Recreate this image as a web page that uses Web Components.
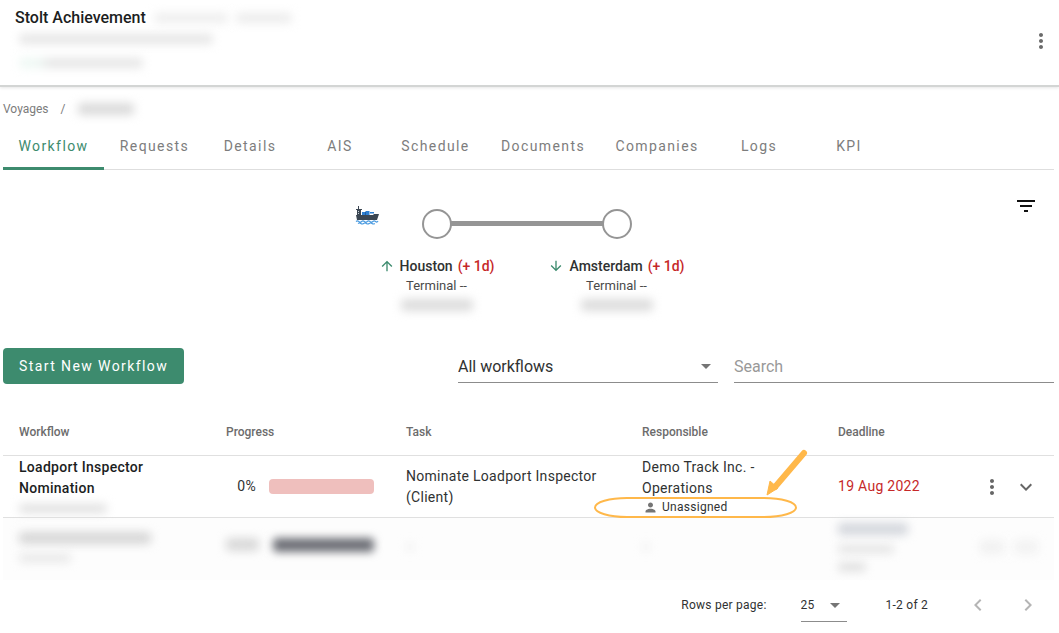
<!DOCTYPE html>
<html lang="en">
<head>
<meta charset="utf-8">
<meta name="viewport" content="width=device-width, initial-scale=1">
<title>Stolt Achievement – Workflow</title>
<style>
  body { margin: 0; background: #fff; color: #303232; font: 14px/21px Roboto, "Liberation Sans", sans-serif; --green: #3d8b6e; --red: #c62828; --line: #e0e0e0; }
</style>
</head>
<body>
<voyage-page></voyage-page>
<script>
const define = (name, html, setup) => customElements.define(name, class extends HTMLElement {
  constructor() {
    super();
    const t = document.createElement('template');
    t.innerHTML = html;
    this.attachShadow({ mode: 'open' }).appendChild(t.content.cloneNode(true));
  }
  connectedCallback() { if (setup) setup(this, this.shadowRoot); }
});

const ICONS = {
  dots: '<path d="M12 8c1.100 0 2-.9 2-2s-.9-2-2-2-2 .9-2 2 .9 2 2 2zm0 2c-1.100 0-2 .9-2 2s.9 2 2 2 2-.9 2-2-.9-2-2-2zm0 6c-1.100 0-2 .9-2 2s.9 2 2 2 2-.9 2-2-.9-2-2-2z"/>',
  filter: '<path d="M10 18h4v-2h-4v2zM3 6v2h18V6H3zm3 7h12v-2H6v2z"/>',
  up: '<path d="M4 12l1.410 1.410L11 7.830V20h2V7.830l5.580 5.590L20 12l-8-8-8 8z"/>',
  down: '<path d="M20 12l-1.410-1.410L13 16.170V4h-2v12.170l-5.580-5.590L4 12l8 8 8-8z"/>',
  expand: '<path d="M16.590 8.590L12 13.170 7.410 8.590 6 10l6 6 6-6z"/>',
  left: '<path d="M15.410 7.410L14 6l-6 6 6 6 1.410-1.410L10.830 12z"/>',
  right: '<path d="M10 6L8.590 7.410 13.170 12l-4.580 4.590L10 18l6-6z"/>',
  caret: '<path d="M7 10l5 5 5-5z"/>',
  person: '<path d="M12 12c2.210 0 4-1.790 4-4s-1.790-4-4-4-4 1.790-4 4 1.790 4 4 4zm0 2c-2.670 0-8 1.340-8 4v2h16v-2c0-2.660-5.330-4-8-4z"/>',
  ship: '<path fill="#3b4652" d="M1 12h17l1-1h5l-2 6H2zM2 7h4v5H2zM3 3h1v4H3zM1 6h6v1H1z"/><path fill="#c9d2da" d="M3 8h1v1H3zM3 10h1v1H3z"/><path fill="#2f7fd0" d="M7 9h3v3H7zM10.500 8h4v4h-4zM15 9h4v1.500h-4z"/><path fill="#1d5fa8" d="M10 9h1v3h-1z"/><path fill="none" stroke="#4b9be0" stroke-width="1.100" d="M1 18.500q1.400-1.400 2.800 0t2.800 0 2.800 0 2.800 0 2.800 0 2.800 0 2.800 0 2.400-.5M3 20.500q1.400-1 2.800 0t2.800 0 2.800 0 2.800 0 2.800 0 2.800 0"/>'
};
define('mat-icon', `<style>
  :host { display: inline-flex; flex: none; width: var(--size, 24px); height: var(--size, 24px); }
  svg { width: 100%; height: 100%; fill: currentColor; }
</style><svg viewBox="0 0 24 24" aria-hidden="true"></svg>`,
  (el, root) => { root.querySelector('svg').innerHTML = ICONS[el.getAttribute('name')] || ''; });

/* A blurred-out value. */
define('hidden-value', `<style>
  :host { display: block; width: var(--w, 80px); height: var(--h, 8px); background: var(--c, #e6e6e6); border-radius: 4px; filter: blur(var(--b, 5px)); }
</style>`);

define('icon-button', `<style>
  :host { display: inline-flex; flex: none; }
  button { display: flex; padding: 0; border: 0; background: none; color: inherit; cursor: pointer; }
</style><button type="button"><slot></slot></button>`,
  (el, root) => root.querySelector('button').setAttribute('aria-label', el.getAttribute('label')));

define('page-header', `<style>
  :host { display: flex; align-items: center; justify-content: space-between; padding: 0 6px 3px 15px; border-bottom: 2px solid #d3d5d4; box-shadow: 0 1px 3px #0000001a; }
  .title { display: flex; align-items: center; gap: 8px; padding-top: 8px; }
  h1 { margin: 0; font-size: 16px; line-height: 20px; font-weight: 500; color: #1c1e1e; }
  .lines { display: grid; gap: 14px; padding: 6px 0 14px 4px; }
  icon-button { color: #6b6b6b; }
</style>
<div>
  <div class="title"><h1>Stolt Achievement</h1><hidden-value style="--w:74px;--h:10px;--c:#eeeeee"></hidden-value><hidden-value style="--w:56px;--h:10px;--c:#ececec"></hidden-value></div>
  <div class="lines"><hidden-value style="--w:194px;--h:10px;--c:#e6e6e6"></hidden-value><hidden-value style="--w:124px;--h:10px;--c:linear-gradient(90deg,#eef8f4 16%,#e6e6e6 24%)"></hidden-value></div>
</div>
<icon-button label="More actions"><mat-icon name="dots"></mat-icon></icon-button>`);

define('bread-crumbs', `<style>
  nav { display: flex; align-items: center; gap: 12px; padding: 12px 0 3px; font-size: 12px; line-height: 20px; color: #7c7c7c; }
  a { color: inherit; text-decoration: none; }
</style><nav aria-label="Breadcrumb"><a href="#voyages">Voyages</a><span>/</span><hidden-value style="--w:56px;--h:12px;--c:#dadada"></hidden-value></nav>`);

define('tab-item', `<style>
  :host { display: block; flex: none; width: 90px; }
  :host([size="medium"]) { width: 101px; }
  :host([size="large"]) { width: 114px; }
  button { box-sizing: border-box; width: 100%; height: 48px; padding: 3px 0 0; border: 0; border-bottom: 3px solid transparent; background: none; font: inherit; letter-spacing: 0.1em; color: #7d7d7d; cursor: pointer; }
  :host([active]) button { color: var(--green); border-color: var(--green); }
</style><button type="button" role="tab"><slot></slot></button>`,
  (el, root) => root.querySelector('button').setAttribute('aria-selected', el.hasAttribute('active')));

define('tab-bar', `<style>
  :host { display: block; }
  div { display: flex; box-shadow: inset 0 -1px #dedede; }
</style><div role="tablist"><slot></slot></div>`);

define('port-stop', `<style>
  :host { display: grid; justify-items: center; width: 180px; }
  .mark { position: relative; display: flex; justify-content: center; width: 100%; margin-bottom: 17px; }
  .dot { box-sizing: border-box; width: 30px; height: 30px; border: 2px solid #959595; border-radius: 50%; background: #fff; }
  :host([linked]) .mark::after { content: ""; position: absolute; top: 12px; left: calc(50% + 14px); width: calc(100% - 28px); height: 5px; background: #959595; }
  .name { display: flex; align-items: center; gap: 5px; line-height: 20px; font-weight: 500; --size: 16px; }
  mat-icon { color: var(--green); }
  .delay { color: var(--red); }
  .terminal { font-size: 13px; line-height: 20px; color: #4a4a4a; }
  hidden-value { margin-top: 3px; }
</style>
<div class="mark"><span class="dot"></span></div>
<div class="name"><mat-icon></mat-icon><slot></slot><span class="delay">(+ 1d)</span></div>
<div class="terminal">Terminal --</div>
<hidden-value style="--w:72px;--h:12px;--c:#dcdcdc"></hidden-value>`,
  (el, root) => {
    const i = root.querySelector('mat-icon');
    i.setAttribute('name', el.getAttribute('way'));
    i.replaceWith(i.cloneNode(true));
  });

define('voyage-track', `<style>
  :host { display: grid; grid-template-columns: 1fr auto 1fr; align-items: start; padding: 39px 16px 37px 12px; }
  .stops { position: relative; display: flex; }
  .ship { position: absolute; left: 8px; top: -6px; }
  .filter { justify-self: end; margin-top: -15px; color: #111; }
</style>
<span></span>
<div class="stops"><mat-icon class="ship" name="ship"></mat-icon><slot></slot></div>
<icon-button class="filter" label="Filter"><mat-icon name="filter"></mat-icon></icon-button>`);

define('workflow-tools', `<style>
  :host { display: flex; align-items: center; justify-content: space-between; gap: 16px; }
  .start { height: 36px; padding: 0 16px; border: 0; border-radius: 4px; background: var(--green); color: #fff; font: inherit; letter-spacing: 0.1em; cursor: pointer; }
  .fields { display: flex; gap: 16px; flex: 0 1 596px; }
  .pick { position: relative; flex: 260 1 0; }
  .pick mat-icon { position: absolute; right: 0; top: 5px; color: #757575; pointer-events: none; }
  select, input { display: block; box-sizing: border-box; width: 100%; height: 34px; padding: 2px 0 0; border: 0; border-bottom: 1px solid #8c8c8c; border-radius: 0; outline: 0; background: none; appearance: none; font: inherit; font-size: 16px; color: #303232; }
  .search { flex: 320 1 0; }
  input::placeholder { color: #999; opacity: 1; }
</style>
<button class="start" type="button">Start New Workflow</button>
<div class="fields">
  <div class="pick"><select aria-label="Workflow filter"><option>All workflows</option></select><mat-icon name="caret"></mat-icon></div>
  <div class="search"><input type="search" placeholder="Search" aria-label="Search"></div>
</div>`);

define('progress-meter', `<style>
  :host { display: flex; align-items: center; justify-content: flex-end; gap: 13px; }
  i { width: 105px; height: 15px; border-radius: 4px; background: #efbfbd; }
</style><slot></slot><i></i>`);

define('callout-mark', `<style>
  :host { position: absolute; left: -33px; top: -7px; pointer-events: none; }
  svg { display: block; width: 216px; height: 72px; }
</style><svg viewBox="0 0 216 72" aria-hidden="true">
  <rect x="2" y="49" width="201" height="19" rx="32" ry="9.500" fill="none" stroke="#ffb84a" stroke-width="2"/>
  <path d="M211 4L182 38" stroke="#ffb84a" stroke-width="6" stroke-linecap="round"/>
  <path d="M174 46l3-14 8 7z" fill="#ffb84a" stroke="#ffb84a" stroke-width="1"/>
</svg>`);

define('workflow-table', `<style>
  :host { display: block; margin-top: 25px; }
  table { width: 100%; table-layout: fixed; border-collapse: separate; border-spacing: 0; }
  th, td { padding: 0 16px; text-align: left; vertical-align: middle; border-bottom: 1px solid var(--line); }
  th { height: 46px; font-size: 12px; line-height: 20px; font-weight: 500; color: #6c6c6c; }
  td { height: 61px; letter-spacing: 0.02em; }
  .name { color: #1c1e1e; font-weight: 500; }
  .name hidden-value { margin: 5px 0 4px; }
  .late { color: var(--red); }
  .who { position: relative; padding-right: 48px; }
  .person { display: flex; align-items: center; gap: 4px; height: 18px; padding-left: 1px; font-size: 12px; --size: 15px; }
  .person mat-icon { color: #757575; }
  td.actions { padding: 0; }
  .actions div { display: flex; gap: 10px; color: #666; }
  .masked td { height: 58px; padding-bottom: 4px; border: 0; background: #fdfdfd; }
  .stack { display: grid; gap: 10px; }
  .row { display: flex; justify-content: flex-end; gap: 14px; margin-bottom: 4px; }
</style>
<table>
  <colgroup><col style="width:207px"><col style="width:180px"><col style="width:236px"><col style="width:196px"><col style="width:158px"><col style="width:74px"></colgroup>
  <thead><tr><th scope="col">Workflow</th><th scope="col">Progress</th><th scope="col">Task</th><th scope="col">Responsible</th><th scope="col">Deadline</th><th></th></tr></thead>
  <tbody>
    <tr>
      <td class="name">Loadport Inspector Nomination<hidden-value style="--w:88px;--h:9px;--c:#e0e0e0"></hidden-value></td>
      <td><progress-meter>0%</progress-meter></td>
      <td>Nominate Loadport Inspector (Client)</td>
      <td class="who">Demo Track Inc. - Operations<div class="person"><mat-icon name="person"></mat-icon>Unassigned</div><callout-mark></callout-mark></td>
      <td class="late">19 Aug 2022</td>
      <td class="actions"><div><icon-button label="Row actions"><mat-icon name="dots"></mat-icon></icon-button><icon-button label="Expand row"><mat-icon name="expand"></mat-icon></icon-button></div></td>
    </tr>
    <tr class="masked">
      <td><div class="stack"><hidden-value style="--w:132px;--h:12px;--c:#d6d6d6"></hidden-value><hidden-value style="--w:52px;--c:#e6e6e6"></hidden-value></div></td>
      <td><div class="row"><hidden-value style="--w:34px;--h:13px;--c:#d8d8d8"></hidden-value><hidden-value style="--w:103px;--h:14px;--c:#6d6f76;--b:4px"></hidden-value></div></td>
      <td><hidden-value style="--w:8px;--c:#f0f0f0"></hidden-value></td>
      <td><hidden-value style="--w:8px;--c:#f0f0f0"></hidden-value></td>
      <td><div class="stack"><hidden-value style="--w:70px;--h:12px;--c:#d3d6dc"></hidden-value><hidden-value style="--w:56px;--c:#e2e2e2"></hidden-value><hidden-value style="--w:28px;--c:#dcdcdc"></hidden-value></div></td>
      <td class="actions"><div><hidden-value style="--w:24px;--h:14px;--c:#f1f1f1"></hidden-value><hidden-value style="--w:24px;--h:14px;--c:#f2f2f2"></hidden-value></div></td>
    </tr>
  </tbody>
</table>`);

define('table-pager', `<style>
  :host { display: flex; align-items: center; justify-content: flex-end; padding: 8px 14px 0 0; font-size: 12px; line-height: 20px; letter-spacing: 0.02em; }
  .size { position: relative; width: 46px; margin: 0 39px 0 34px; }
  select { display: block; box-sizing: border-box; width: 100%; height: 34px; padding: 0; border: 0; border-bottom: 1px solid #8c8c8c; border-radius: 0; background: none; appearance: none; font: inherit; letter-spacing: inherit; color: inherit; }
  .size mat-icon { position: absolute; right: 0; top: 5px; color: #757575; pointer-events: none; }
  .steps { display: flex; gap: 26px; margin-left: 38px; color: #b5b5b5; }
</style>
<label for="rows">Rows per page:</label>
<div class="size"><select id="rows"><option>25</option></select><mat-icon name="caret"></mat-icon></div>
<span>1-2 of 2</span>
<div class="steps"><icon-button label="Previous page"><mat-icon name="left"></mat-icon></icon-button><icon-button label="Next page"><mat-icon name="right"></mat-icon></icon-button></div>`);

define('voyage-page', `<style>
  :host { display: block; }
  main { padding: 0 5px 0 3px; }
</style>
<page-header></page-header>
<main>
  <bread-crumbs></bread-crumbs>
  <tab-bar>
    <tab-item size="medium" active>Workflow</tab-item><tab-item size="medium">Requests</tab-item><tab-item>Details</tab-item><tab-item>AIS</tab-item><tab-item size="medium">Schedule</tab-item><tab-item size="large">Documents</tab-item><tab-item size="large">Companies</tab-item><tab-item>Logs</tab-item><tab-item>KPI</tab-item>
  </tab-bar>
  <voyage-track><port-stop way="up" linked>Houston</port-stop><port-stop way="down">Amsterdam</port-stop></voyage-track>
  <workflow-tools></workflow-tools>
  <workflow-table></workflow-table>
  <table-pager></table-pager>
</main>`);
</script>
</body>
</html>
